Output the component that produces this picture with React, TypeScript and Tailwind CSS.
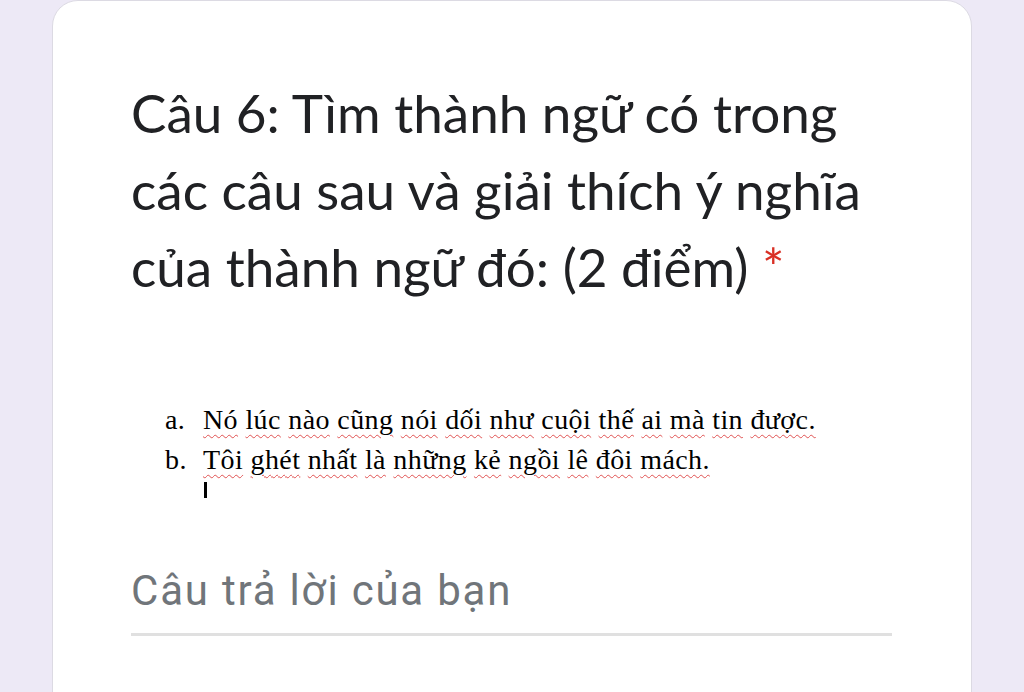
import * as React from "react";

const lineA = "Nó lúc nào cũng nói dối như cuội thế ai mà tin được.".split(" ");
const lineB = "Tôi ghét nhất là những kẻ ngồi lê đôi mách.".split(" ");

function Squiggly(props: { words: string[] }) {
  return (
    <>
      {props.words.map((w, i) => (
        <React.Fragment key={i}>
          <span className="underline decoration-wavy decoration-[#e05252] decoration-1 underline-offset-[5px]">
            {w}
          </span>
          {i < props.words.length - 1 ? " " : ""}
        </React.Fragment>
      ))}
    </>
  );
}

export default function App() {
  return (
    <div className="h-[692px] w-[1024px] overflow-hidden bg-[#ede9f6] px-[52px]">
      <div className="h-[720px] rounded-t-[26px] border border-[#dcdae3] bg-white pl-[78px] pr-[77px] pt-[73px]">
        <h1
          className="text-[53px] leading-[77px] text-[#202124]"
          style={{ fontFamily: "Lato, sans-serif" }}
        >
          Câu 6: Tìm thành ngữ có trong các câu sau và giải thích ý nghĩa của
          thành ngữ đó: (2 điểm) <span className="text-[#d93025]">*</span>
        </h1>

        <div
          className="mt-[95px] pl-[34px] text-[28px] leading-[40px] tracking-[0.4px] text-black"
          style={{ fontFamily: '"Liberation Serif", serif' }}
        >
          <div className="flex">
            <span className="w-[38px]">a.</span>
            <span>
              <Squiggly words={lineA} />
            </span>
          </div>
          <div className="flex">
            <span className="w-[38px]">b.</span>
            <span>
              <Squiggly words={lineB} />
            </span>
          </div>
          <div className="ml-[39px] mt-[2px] h-[16px] w-[3px] bg-black" />
        </div>

        <div
          className="mt-[68px] text-[42px] leading-[50px] tracking-[1.8px] text-[#70757a]"
          style={{ fontFamily: "Roboto, sans-serif" }}
        >
          Câu trả lời của bạn
        </div>
        <div className="mt-[17px] h-[3px] w-[761px] bg-[#e0e0e0]" />
      </div>
    </div>
  );
}
